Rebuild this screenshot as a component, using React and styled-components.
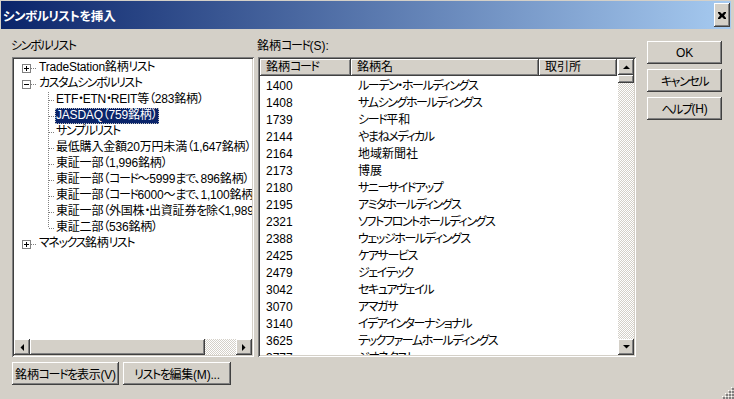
import React from "react";
import styled, { createGlobalStyle } from "styled-components";

const FACE = "#D4D0C8";

const GlobalStyle = createGlobalStyle`
  html, body {
    margin: 0;
    padding: 0;
    background: ${FACE};
  }
  body {
    font-family: "Liberation Sans", "Noto Sans CJK JP", sans-serif;
    font-size: 12px;
    color: #000;
    font-feature-settings: "palt";
  }
  * {
    box-sizing: border-box;
  }
`;

const raised = `
  background: ${FACE};
  box-shadow: inset -1px -1px #404040, inset 1px 1px #fff,
    inset -2px -2px #808080, inset 2px 2px ${FACE};
`;

const sunken = `
  box-shadow: inset 1px 1px #808080, inset -1px -1px #fff,
    inset 2px 2px #404040, inset -2px -2px ${FACE};
`;

const dither = `
  background: repeating-conic-gradient(#fff 0 25%, ${FACE} 0 50%) 0 0 / 2px 2px;
`;

// kana in the old UI font are narrower than in Noto, so squeeze them
const Kana = styled.span`
  letter-spacing: ${(p) => p.$squeeze ?? -1.4}px;
`;

const jp = (text, squeeze) =>
  text.split(/([\u3041-\u30ff]+)/).map((part, i) =>
    i % 2 ? (
      <Kana key={i} $squeeze={squeeze}>
        {part}
      </Kana>
    ) : (
      part
    )
  );

const Window = styled.div`
  width: 734px;
  height: 399px;
  padding: 1px 3px 0 1px;
  display: flex;
  flex-direction: column;
  overflow: hidden;
`;

const TitleBar = styled.div`
  height: 28px;
  flex: 0 0 28px;
  display: flex;
  align-items: center;
  justify-content: space-between;
  padding: 0 1px 0 2px;
  background: linear-gradient(90deg, #0a246a 0%, #a6caf0 100%);
`;

const Title = styled.span`
  color: #fff;
  font-weight: bold;
  font-size: 12.5px;
  font-family: "Noto Sans CJK JP", sans-serif;
`;

const CloseButton = styled.div`
  ${raised}
  width: 16px;
  height: 24px;
  display: flex;
  align-items: center;
  justify-content: center;
`;

const Body = styled.div`
  flex: 1;
  display: flex;
  padding: 9px 0 0 9px;
  position: relative;
`;

const LeftColumn = styled.div`
  width: 244px;
  display: flex;
  flex-direction: column;
`;

const RightColumn = styled.div`
  width: 380px;
  margin-left: 3px;
  display: flex;
  flex-direction: column;
`;

const Label = styled.div`
  height: 19px;
  line-height: 16px;
  padding-left: ${(p) => p.$indent || 0}px;
`;

const Sunken = styled.div`
  ${sunken}
  background: #fff;
  padding: 2px;
  margin-left: ${(p) => p.$offset || 0}px;
  width: ${(p) => p.$width}px;
  height: 300px;
  display: flex;
  flex-direction: ${(p) => (p.$row ? "row" : "column")};
  overflow: hidden;
`;

const TreeArea = styled.div`
  flex: 1;
  padding-top: 1px;
  overflow: hidden;
`;

const TreeRow = styled.div`
  height: 16px;
  display: flex;
  align-items: center;
  white-space: nowrap;
  padding-left: ${(p) => (p.$child ? 31 : 8)}px;

  & > svg {
    flex-shrink: 0;
  }
`;

const TreeText = styled.span`
  flex-shrink: 0;
  height: 16px;
  line-height: 15px;
  padding: 0 2px 0 1px;
  letter-spacing: -0.2px;
  margin-left: ${(p) => (p.$child ? 0 : 1)}px;
  background: ${(p) => (p.$selected ? "#0a246a" : "transparent")};
  color: ${(p) => (p.$selected ? "#fff" : "#000")};
  outline: ${(p) => (p.$selected ? "1px dotted #c0c0c0" : "none")};
  outline-offset: -1px;
`;

const HScroll = styled.div`
  height: 16px;
  flex: 0 0 16px;
  display: flex;
`;

const VScroll = styled.div`
  width: 16px;
  flex: 0 0 16px;
  display: flex;
  flex-direction: column;
`;

const ArrowButton = styled.div`
  ${raised}
  width: 16px;
  height: 16px;
  flex: 0 0 16px;
  display: flex;
  align-items: center;
  justify-content: center;
`;

const Thumb = styled.div`
  ${raised}
  flex: 0 0 ${(p) => p.$size}px;
`;

const Track = styled.div`
  ${dither}
  flex: 1;
`;

const ButtonRow = styled.div`
  display: flex;
  gap: 4px;
  margin: 5px 0 0 2px;
`;

const Button = styled.div`
  ${raised}
  height: 23px;
  width: ${(p) => p.$width}px;
  display: flex;
  align-items: center;
  justify-content: center;
  white-space: nowrap;
  letter-spacing: -0.2px;
`;

const SideButtons = styled.div`
  margin-left: 10px;
  padding-top: 3px;
  display: flex;
  flex-direction: column;
  gap: 5px;
`;

const ListMain = styled.div`
  flex: 1;
  display: flex;
  flex-direction: column;
  overflow: hidden;
`;

const HeaderRow = styled.div`
  display: flex;
  height: 17px;
  flex: 0 0 17px;
`;

const HeaderCell = styled.div`
  ${raised}
  width: ${(p) => p.$width}px;
  flex: 0 0 ${(p) => p.$width}px;
  padding-left: 6px;
  line-height: 16px;
  white-space: nowrap;
`;

const Rows = styled.div`
  flex: 1;
  padding-top: 2px;
  overflow: hidden;
`;

const Row = styled.div`
  height: 17px;
  line-height: 17px;
  display: flex;
  align-items: center;
  white-space: nowrap;
`;

const CodeCell = styled.span`
  width: 91px;
  flex-shrink: 0;
  padding-left: 6px;
`;

const NameCell = styled.span`
  padding-left: 7px;
`;

const Grip = styled.svg`
  position: absolute;
  right: -3px;
  bottom: 0;
`;

const Triangle = ({ dir }) => {
  const pts = {
    up: "0,4 7,4 3.5,0.5",
    down: "0,0 7,0 3.5,3.5",
    left: "4,0 4,7 0.5,3.5",
    right: "0,0 0,7 3.5,3.5",
  }[dir];
  const vertical = dir === "up" || dir === "down";
  return (
    <svg width={vertical ? 7 : 4} height={vertical ? 4 : 7}>
      <polygon points={pts} fill="#000" />
    </svg>
  );
};

const ExpandBox = ({ open }) => (
  <svg width="15" height="9">
    <rect x="0.5" y="0.5" width="8" height="8" fill="#fff" stroke="#808080" />
    <line x1="2" y1="4.5" x2="7" y2="4.5" stroke="#000" />
    {!open && <line x1="4.5" y1="2" x2="4.5" y2="7" stroke="#000" />}
    <line x1="9" y1="4.5" x2="15" y2="4.5" stroke="#808080" strokeDasharray="1 1" />
  </svg>
);

const Connector = ({ last }) => (
  <svg width="10" height="16">
    <line x1="3.5" y1="0" x2="3.5" y2={last ? 8 : 16} stroke="#808080" strokeDasharray="1 1" />
    <line x1="4" y1="8.5" x2="10" y2="8.5" stroke="#808080" strokeDasharray="1 1" />
  </svg>
);

const tree = [
  { label: "TradeStation銘柄リスト", box: "plus" },
  { label: "カスタムシンボルリスト", box: "minus" },
  { label: "ETF・ETN・REIT等（283銘柄）" },
  { label: "JASDAQ（759銘柄）", selected: true },
  { label: "サンプルリスト" },
  { label: "最低購入金額20万円未満（1,647銘柄）" },
  { label: "東証一部（1,996銘柄）" },
  { label: "東証一部（コード～5999まで、896銘柄）" },
  { label: "東証一部（コード6000～まで、1,100銘柄）" },
  { label: "東証一部（外国株・出資証券を除く1,989銘柄）" },
  { label: "東証二部（536銘柄）", last: true },
  { label: "マネックス銘柄リスト", box: "plus" },
];

const symbols = [
  ["1400", "ルーデン・ホールディングス"],
  ["1408", "サムシングホールディングス"],
  ["1739", "シード平和"],
  ["2144", "やまねメディカル"],
  ["2164", "地域新聞社"],
  ["2173", "博展"],
  ["2180", "サニーサイドアップ"],
  ["2195", "アミタホールディングス"],
  ["2321", "ソフトフロントホールディングス"],
  ["2388", "ウェッジホールディングス"],
  ["2425", "ケアサービス"],
  ["2479", "ジェイテック"],
  ["3042", "セキュアヴェイル"],
  ["3070", "アマガサ"],
  ["3140", "イデアインターナショナル"],
  ["3625", "テックファームホールディングス"],
  ["3777", "ジオネクスト"],
];

export default function App() {
  return (
    <>
      <GlobalStyle />
      <Window>
        <TitleBar>
          <Title>{jp("シンボルリストを挿入", -0.6)}</Title>
          <CloseButton>
            <svg width="8" height="7">
              <path d="M0 0h2l2 2 2-2h2v1L6 3.5 8 6v1H6L4 5 2 7H0V6l2-2.5L0 1z" fill="#000" />
            </svg>
          </CloseButton>
        </TitleBar>
        <Body>
          <LeftColumn>
            <Label $indent={1}>{jp("シンボルリスト")}</Label>
            <Sunken $width={242} $offset={2}>
              <TreeArea>
                {tree.map((item) =>
                  item.box ? (
                    <TreeRow key={item.label}>
                      <ExpandBox open={item.box === "minus"} />
                      <TreeText>{jp(item.label)}</TreeText>
                    </TreeRow>
                  ) : (
                    <TreeRow key={item.label} $child>
                      <Connector last={item.last} />
                      <TreeText $child $selected={item.selected}>
                        {jp(item.label)}
                      </TreeText>
                    </TreeRow>
                  )
                )}
              </TreeArea>
              <HScroll>
                <ArrowButton>
                  <Triangle dir="left" />
                </ArrowButton>
                <Thumb $size={175} />
                <Track />
                <ArrowButton>
                  <Triangle dir="right" />
                </ArrowButton>
              </HScroll>
            </Sunken>
            <ButtonRow>
              <Button $width={107}>{jp("銘柄コードを表示(V)")}</Button>
              <Button $width={108}>{jp("リストを編集(M)...")}</Button>
            </ButtonRow>
          </LeftColumn>
          <RightColumn>
            <Label>{jp("銘柄コード(S):")}</Label>
            <Sunken $width={378} $offset={1} $row>
              <ListMain>
                <HeaderRow>
                  <HeaderCell $width={91}>{jp("銘柄コード")}</HeaderCell>
                  <HeaderCell $width={188}>銘柄名</HeaderCell>
                  <HeaderCell $width={78}>取引所</HeaderCell>
                </HeaderRow>
                <Rows>
                  {symbols.map(([code, name]) => (
                    <Row key={code}>
                      <CodeCell>{code}</CodeCell>
                      <NameCell>{jp(name)}</NameCell>
                    </Row>
                  ))}
                </Rows>
              </ListMain>
              <VScroll>
                <ArrowButton>
                  <Triangle dir="up" />
                </ArrowButton>
                <Thumb $size={8} />
                <Track />
                <ArrowButton>
                  <Triangle dir="down" />
                </ArrowButton>
              </VScroll>
            </Sunken>
          </RightColumn>
          <SideButtons>
            <Button $width={75}>OK</Button>
            <Button $width={75}>{jp("キャンセル")}</Button>
            <Button $width={75}>{jp("ヘルプ(H)")}</Button>
          </SideButtons>
          <Grip width="12" height="12">
            {[
              [9, 0], [6, 3], [9, 3], [3, 6], [6, 6], [9, 6], [0, 9], [3, 9], [6, 9], [9, 9],
            ].map(([x, y]) => (
              <g key={`${x}-${y}`}>
                <rect x={x + 1} y={y + 1} width="2" height="2" fill="#808080" />
                <rect x={x} y={y} width="1" height="1" fill="#fff" />
              </g>
            ))}
          </Grip>
        </Body>
      </Window>
    </>
  );
}
